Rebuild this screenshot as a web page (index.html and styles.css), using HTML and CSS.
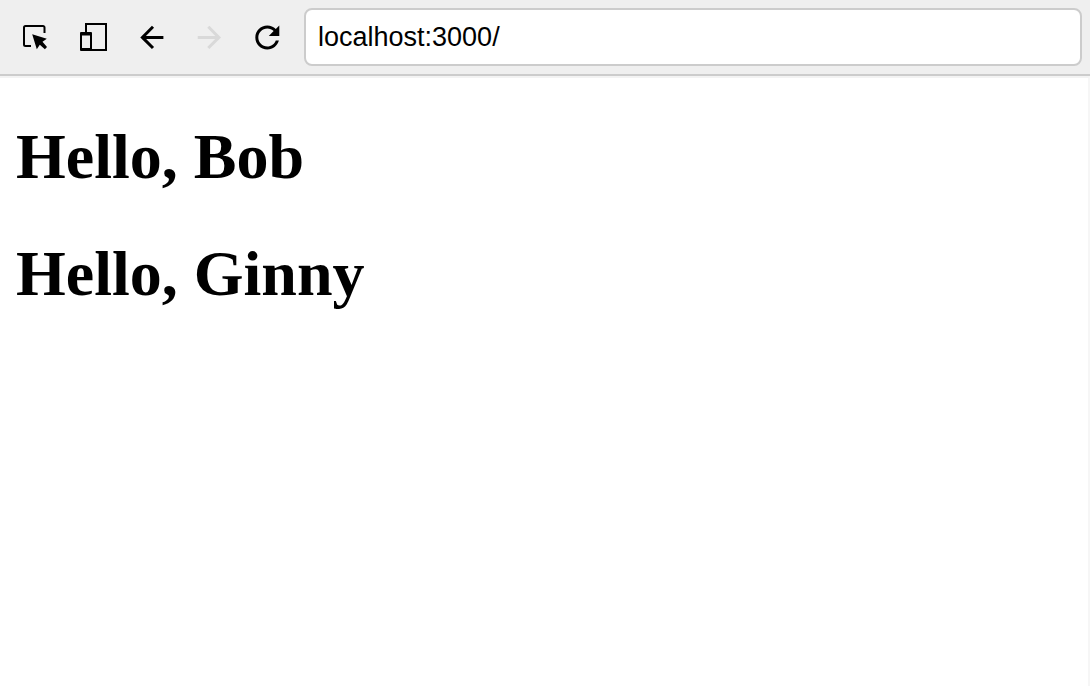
FILE: index.html
```html
<!DOCTYPE html>
<html lang="en">
<head>
<meta charset="utf-8">
<title>localhost:3000</title>
<link rel="stylesheet" href="styles.css">
</head>
<body>
<header class="toolbar">
  <div class="tools">
    <button class="tool" type="button" aria-label="Inspect element">
      <svg viewBox="0 0 40 40" aria-hidden="true"><path class="line" d="M16 29H10.500a1.500 1.500 0 0 1-1.500-1.500V10.500a1.500 1.500 0 0 1 1.500-1.500h17.500a1.500 1.500 0 0 1 1.500 1.500v5.500"/><path class="solid" d="M17.200 17.200 31.800 21.800l-4.300 3 4.500 5.200-2.100 2.300-5.100-4.600-3 4.500z"/></svg>
    </button>
    <button class="tool" type="button" aria-label="Toggle device emulation">
      <svg viewBox="0 0 40 40" aria-hidden="true"><path class="line" d="M13 16V7h20v26H18"/><path class="solid" fill-rule="evenodd" d="M8 15h10a1 1 0 0 1 1 1v17a1 1 0 0 1-1 1H8a1 1 0 0 1-1-1V16a1 1 0 0 1 1-1zm1 3.500V31h8V18.500z"/></svg>
    </button>
    <button class="tool" type="button" aria-label="Back">
      <svg viewBox="0 0 40 40" aria-hidden="true"><path class="arrow" d="M32.400 20.400H11M22 9.800 11.400 20.400 22 31"/></svg>
    </button>
    <button class="tool" type="button" aria-label="Forward" disabled>
      <svg viewBox="0 0 40 40" aria-hidden="true"><path class="arrow" d="M8.700 20.400H30M19.300 9.800 29.900 20.400 19.300 31"/></svg>
    </button>
    <button class="tool" type="button" aria-label="Reload">
      <svg viewBox="0 0 40 40" aria-hidden="true"><path class="solid" transform="translate(2.300 2.400) scale(1.500)" d="M17.65 6.350C16.200 4.900 14.210 4 12 4c-4.420 0-7.990 3.580-7.990 8s3.570 8 7.990 8c3.730 0 6.840-2.550 7.730-6h-2.080c-.82 2.330-3.040 4-5.650 4-3.310 0-6-2.690-6-6s2.690-6 6-6c1.660 0 3.140.69 4.220 1.780L13 11h7V4l-2.350 2.350z"/></svg>
    </button>
  </div>
  <input class="address" type="text" aria-label="Address" value="localhost:3000/">
</header>
<main class="page">
  <h1 class="greeting">Hello, Bob</h1>
  <h1 class="greeting">Hello, Ginny</h1>
</main>
</body>
</html>
```
FILE: styles.css
```css
* {
  box-sizing: border-box;
}

body {
  display: flex;
  flex-direction: column;
  min-height: 100vh;
  margin: 0;
  background: #fff;
  color: #000;
}

.toolbar {
  display: flex;
  align-items: center;
  gap: 8px;
  padding: 8px 8px 8px 6px;
  border-bottom: 2px solid #ccc;
  background: #efefef;
}

.tools {
  display: flex;
}

.tool {
  display: flex;
  align-items: center;
  justify-content: center;
  width: 58px;
  height: 58px;
  padding: 0;
  border: 0;
  background: none;
  color: #000;
}

.tool:disabled {
  color: #d9d9d9;
}

.tool svg {
  width: 40px;
  height: 40px;
}

.line,
.arrow {
  fill: none;
  stroke: currentColor;
  stroke-width: 2;
}

.arrow {
  stroke-width: 3;
}

.solid {
  fill: currentColor;
}

.address {
  flex: 1;
  min-width: 0;
  height: 58px;
  padding: 0 12px;
  border: 2px solid #ccc;
  border-radius: 8px;
  background: #fff;
  color: #000;
  font: 27px "Liberation Sans", Arial, sans-serif;
}

.page {
  flex: 1;
  display: flex;
  flex-direction: column;
  gap: 43px;
  padding: 42px 16px;
  border-top: 2px solid #f3f3f3;
  border-right: 2px solid #f6f6f6;
}

.greeting {
  margin: 0;
  font: bold 64px/74px "Liberation Serif", "Times New Roman", serif;
}
```
